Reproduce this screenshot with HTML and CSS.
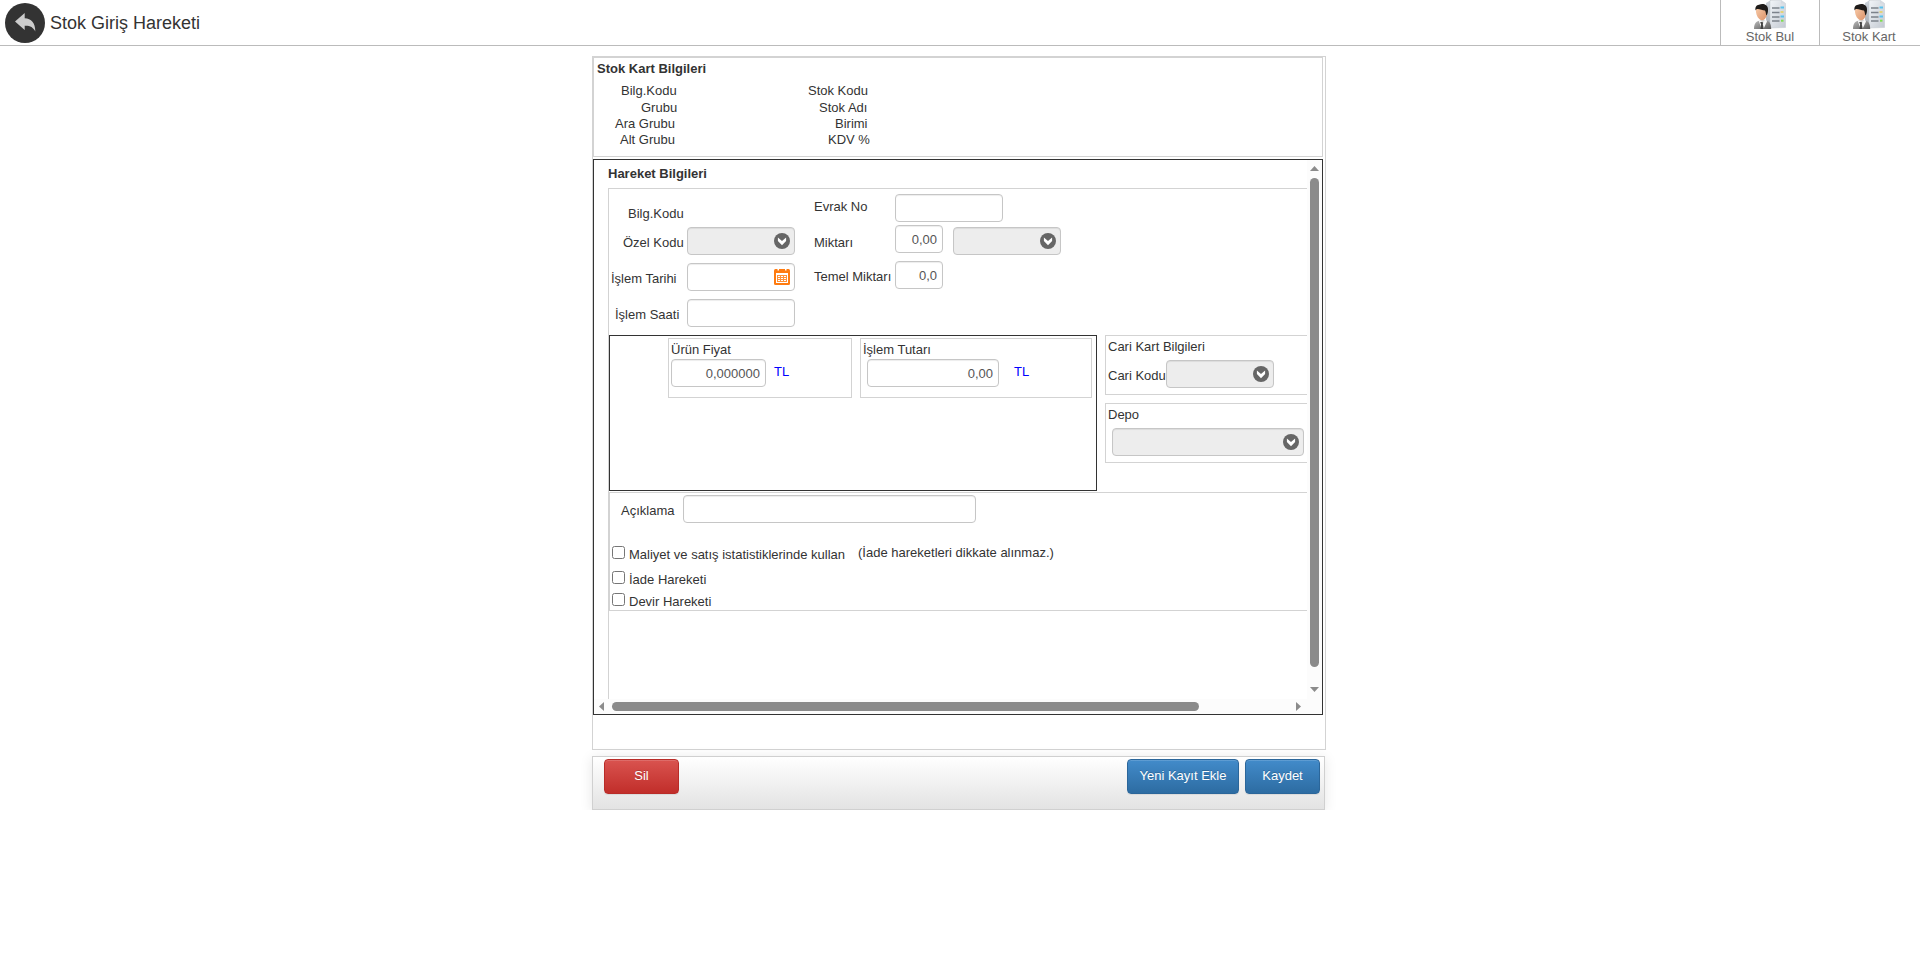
FILE: index.html
```html
<!DOCTYPE html>
<html lang="tr">
<head>
<meta charset="utf-8">
<title>Stok Giriş Hareketi</title>
<link rel="stylesheet" href="styles.css">
</head>
<body>
<svg class="defs" width="0" height="0">
  <defs>
    <linearGradient id="gServer" x1="0" y1="0" x2="1" y2="1"><stop offset="0" stop-color="#f1f4f8"/><stop offset="1" stop-color="#c3c9d1"/></linearGradient>
    <linearGradient id="gSide" x1="0" y1="0" x2="0" y2="1"><stop offset="0" stop-color="#cdd3da"/><stop offset="1" stop-color="#a4abb4"/></linearGradient>
    <linearGradient id="gFace" x1="0" y1="0" x2="1" y2="1"><stop offset="0" stop-color="#fbd0ae"/><stop offset="1" stop-color="#d98f66"/></linearGradient>
    <linearGradient id="gSuit" x1="0" y1="0" x2="1" y2="1"><stop offset="0" stop-color="#bdbdbd"/><stop offset="1" stop-color="#5a5a5a"/></linearGradient>
  </defs>
  <symbol id="user-server" viewBox="0 0 32 30">
    <path d="M12 3l5-3v26l-5 2z" fill="url(#gSide)"/>
    <path d="M16 .5l11-.3 4.600 3.300v24L16 28z" fill="url(#gServer)" stroke="#c2c8cf" stroke-width=".5"/>
    <path d="M27 .2l4.600 3.300H27z" fill="#d5dae0"/>
    <path d="M18 8h7.500M18 12.500h7.500M18 17h7.500M18 21h7.500" stroke="#7c828b" stroke-width="1.600"/>
    <path d="M26.500 7.500h3.500M26.500 16.500h3.500" stroke="#58c3ef" stroke-width="2"/>
    <path d="M26.500 12h3" stroke="#e5d26c" stroke-width="1.800"/>
    <path d="M27 20.700h2.500" stroke="#7ee04c" stroke-width="2"/>
    <path d="M0 29c0-5 1.500-7.500 6-8.500h6c4 1 5 3.500 5.200 8.500z" fill="url(#gSuit)"/>
    <path d="M4.500 20l4.500 1.500 3-2 1 2-3.500 7.500h-2z" fill="#f7f7f7"/>
    <path d="M6 22.500l2-.8 1.300 1-.5 1.400 1 4.900H6.500l.6-4.900z" fill="#444"/>
    <path d="M2 9c0-4 9-6 11 0 .8 4 .2 8-2.700 10.500-1.500 1.300-3.500 1-5-.5C3 17 1.500 13 2 9z" fill="url(#gFace)"/>
    <path d="M1.600 10.500C.8 7 2.500 5 5 4.700c4-1.500 8.800-.2 9 4.300.1 3-.5 5.500-1.600 6.500-.6-1.500-.4-3.500-1.400-5C8.500 10.200 5 8.500 3 9c-.8.300-1 1-1.400 1.500z" fill="#1e1b19"/>
  </symbol>
  <symbol id="chevron" viewBox="0 0 16 16">
    <circle cx="8" cy="8" r="8" fill="#666"/>
    <path d="M3.900 4.600L8 8l4.100-3.400v3.300L8 12.300 3.900 7.900z" fill="#fff"/>
  </symbol>
</svg>

<header class="topbar">
  <svg class="back" viewBox="0 0 40 40">
    <circle cx="20" cy="20" r="20" fill="#333"/>
    <path d="M10 18.500L19.700 10v5.200c6.500.4 10.700 4.400 10.600 13.300-2.200-4.300-5.500-6-10.600-5.700V27z" fill="#ccc"/>
  </svg>
  <h1 class="title">Stok Giriş Hareketi</h1>
  <nav class="tools">
    <a class="tool"><svg class="tool-icon"><use href="#user-server"/></svg><span>Stok Bul</span></a>
    <a class="tool tool-last"><svg class="tool-icon"><use href="#user-server"/></svg><span>Stok Kart</span></a>
  </nav>
</header>

<main class="page">
  <section class="card">
    <div class="stock">
      <h2 class="stock-title">Stok Kart Bilgileri</h2>
      <div class="stock-grid">
        <span class="s1">Bilg.Kodu</span><span class="t1">Stok Kodu</span>
        <span class="s2">Grubu</span><span class="t2">Stok Adı</span>
        <span class="s3">Ara Grubu</span><span class="t3">Birimi</span>
        <span class="s4">Alt Grubu</span><span class="t4">KDV %</span>
      </div>
    </div>

    <div class="scroller">
      <div class="viewport">
        <h2 class="move-title">Hareket Bilgileri</h2>
        <div class="form">
          <div class="top">
            <div class="col-left">
              <div class="code">Bilg.Kodu</div>
              <div class="row"><label class="ozel">Özel Kodu</label><div class="combo w108"><svg class="ico"><use href="#chevron"/></svg></div></div>
              <div class="row"><label class="tarih">İşlem Tarihi</label><div class="box w108">
                <svg class="ico" viewBox="0 0 16 16"><rect width="16" height="16" rx="1.500" fill="#ff7b0f"/><path d="M3.500 0h1.500v1.500H3.500zM11 0h1.500v1.500H11zM2 4h12v10H2z" fill="#fff"/><path d="M3 6h10v7H3z" fill="#ff9138"/><path d="M4 7h2v1H4zM7 7h2v1H7zM10 7h2v1h-2zM4 9h2v1H4zM7 9h2v1H7zM10 9h2v1h-2zM4 11h2v1H4zM7 11h2v1H7zM10 11h2v1h-2z" fill="#fff"/></svg>
              </div></div>
              <div class="row"><label class="saat">İşlem Saati</label><div class="box w108"></div></div>
            </div>
            <div class="col-right">
              <div class="row evrak"><label>Evrak No</label><div class="box w108"></div></div>
              <div class="row miktar"><label>Miktarı</label><div class="box w48">0,00</div><div class="combo w108 unit"><svg class="ico"><use href="#chevron"/></svg></div></div>
              <div class="row temel"><label>Temel Miktarı</label><div class="box w48">0,0</div></div>
            </div>
          </div>

          <div class="middle">
            <div class="prices">
              <div class="price p1">
                <div class="cap">Ürün Fiyat</div>
                <div class="line"><div class="box w95">0,000000</div><span class="cur">TL</span></div>
              </div>
              <div class="price p2">
                <div class="cap">İşlem Tutarı</div>
                <div class="line"><div class="box w132">0,00</div><span class="cur">TL</span></div>
              </div>
            </div>
            <div class="side">
              <div class="panel">
                <div class="cap">Cari Kart Bilgileri</div>
                <div class="line cari"><label>Cari Kodu</label><div class="combo w108"><svg class="ico"><use href="#chevron"/></svg></div></div>
              </div>
              <div class="panel">
                <div class="cap">Depo</div>
                <div class="line depo"><div class="combo w192"><svg class="ico"><use href="#chevron"/></svg></div></div>
              </div>
            </div>
          </div>

          <div class="notes">
            <div class="desc"><label>Açıklama</label><div class="box w293"></div></div>
            <div class="check c1"><input type="checkbox"><span>Maliyet ve satış istatistiklerinde kullan</span><em>(İade hareketleri dikkate alınmaz.)</em></div>
            <div class="check c2"><input type="checkbox"><span>İade Hareketi</span></div>
            <div class="check c3"><input type="checkbox"><span>Devir Hareketi</span></div>
          </div>
        </div>
      </div>
      <div class="vbar">
        <svg class="arrow-v" viewBox="0 0 9 5"><path d="M0 5L4.500 0 9 5z" fill="#8b8b8b"/></svg>
        <div class="vthumb"></div>
        <svg class="arrow-v down" viewBox="0 0 9 5"><path d="M0 0h9L4.500 5z" fill="#8b8b8b"/></svg>
      </div>
      <div class="hbar">
        <svg class="arrow-h" viewBox="0 0 5 9"><path d="M5 0v9L0 4.500z" fill="#8b8b8b"/></svg>
        <div class="hthumb"></div>
        <svg class="arrow-h right" viewBox="0 0 5 9"><path d="M0 0v9l5-4.500z" fill="#8b8b8b"/></svg>
      </div>
    </div>
  </section>

  <footer class="actions">
    <button class="btn red">Sil</button>
    <button class="btn blue wide">Yeni Kayıt Ekle</button>
    <button class="btn blue">Kaydet</button>
  </footer>
</main>
</body>
</html>
```
FILE: styles.css
```css
* { box-sizing: border-box; }
body {
  margin: 0;
  background: #fff;
  color: #333;
  font: 13px/15px "Liberation Sans", Arial, sans-serif;
}
h1, h2 { margin: 0; font-size: inherit; }
svg { display: block; }
label, span, em { white-space: nowrap; }

/* header */
.topbar { display: flex; height: 46px; border-bottom: 1px solid #bbb; }
.back { width: 40px; height: 40px; margin: 3px 5px 0; }
.title { font-size: 18px; font-weight: 400; line-height: 20px; padding-top: 13px; }
.tools { display: flex; margin-left: auto; }
.tool {
  display: flex; flex-direction: column; align-items: center;
  width: 99px; border-left: 1px solid #bbb; color: #666;
}
.tool-last { width: 101px; padding-right: 2px; }
.tool-icon { width: 32px; height: 30px; margin-bottom: -1px; }

/* main card */
.page { width: 734px; margin: 10px 0 0 592px; }
.card { height: 694px; border: 1px solid #d3d3d3; }
.stock { width: 730px; height: 100px; border: 1px solid #d3d3d3; }
.stock-title { padding: 3px 0 0 3px; }
.stock-grid {
  display: grid; grid-template-columns: 194px 1fr; grid-template-rows: 17px 16px 16px 16px;
  padding: 7px 0 0 20px;
}
.s1 { margin-left: 7px; }
.s2 { margin-left: 27px; }
.s3 { margin-left: 1px; }
.s4 { margin-left: 6px; }
.t2 { margin-left: 11px; }
.t3 { margin-left: 27px; }
.t4 { margin-left: 20px; }

/* scrolling area */
.scroller {
  display: grid; grid-template: 539px 15px / 713px 15px;
  width: 730px; height: 556px; margin-top: 2px; border: 1px solid #333;
}
.viewport { overflow: hidden; padding: 6px 0 0 14px; }
.vbar { display: flex; flex-direction: column; align-items: center; background: #fcfcfc; padding-top: 6px; }
.hbar { display: flex; align-items: center; grid-column: 1 / 3; background: #fcfcfc; padding-left: 5px; }
.arrow-v { width: 9px; height: 5px; }
.arrow-h { width: 5px; height: 9px; }
.vthumb { width: 9px; height: 489px; margin-top: 7px; border-radius: 5px; background: #8b8b8b; }
.hthumb { width: 587px; height: 9px; margin-left: 8px; border-radius: 5px; background: #8b8b8b; }
.down { margin-top: 20px; }
.right { margin-left: 97px; }

/* form */
.form { width: 900px; height: 600px; margin-top: 7px; border: 1px solid #d3d3d3; }
.top { display: flex; height: 146px; }
.col-left { width: 205px; padding-top: 17px; }
.code { padding-left: 19px; height: 21px; }
.row { display: flex; align-items: flex-start; height: 36px; }
.row label { padding-top: 8px; }
.col-left label { width: 78px; }
.ozel { padding-left: 14px; }
.tarih { padding-left: 2px; }
.saat { padding-left: 6px; }
.col-right { padding-top: 5px; }
.col-right label { width: 81px; }
.evrak { height: 31px; }
.evrak label { padding-top: 5px; }
.miktar label { padding-top: 10px; }
.unit { margin: 2px 0 0 10px; }

.box, .combo {
  display: flex; justify-content: flex-end; align-items: center; flex: none;
  height: 28px; padding: 1px 5px 0; color: #555;
  border: 1px solid #c6c6c6; border-radius: 4px; background: #fff;
  box-shadow: inset 0 1px 1px rgba(0, 0, 0, .075);
}
.combo { background: #ededed; }
.ico { width: 16px; height: 16px; margin: -1px -1px 0 0; }
.w48 { width: 48px; }
.w95 { width: 95px; }
.w108 { width: 108px; }
.w132 { width: 132px; }
.w192 { width: 192px; }
.w293 { width: 293px; }

.middle { display: flex; height: 157px; }
.prices { display: flex; gap: 8px; width: 488px; height: 156px; padding: 2px 0 0 58px; border: 1px solid #333; }
.price { height: 60px; padding: 3px 2px 0; border: 1px solid #d3d3d3; }
.p1 { width: 184px; }
.p2 { width: 232px; }
.line { display: flex; }
.price .line { padding-top: 2px; }
.cur { padding: 5px 0 0 8px; color: #00f; }
.p2 .line { padding-left: 4px; }
.p2 .cur { padding-left: 15px; }
.side { flex: 1; padding-left: 8px; }
.panel { height: 60px; margin-bottom: 8px; padding: 3px 2px 0; border: 1px solid #d3d3d3; }
.cari { padding-top: 6px; }
.cari label { width: 58px; padding-top: 8px; }
.depo { padding: 6px 0 0 4px; }

.notes { height: 119px; border: 1px solid #d3d3d3; }
.desc { display: flex; padding-top: 2px; }
.desc label { width: 73px; padding: 8px 0 0 11px; }
.check { display: flex; padding-left: 2px; }
.check input { width: 13px; height: 13px; margin: 0 4px 0 0; }
.check span { padding-top: 1px; }
.check em { font-style: normal; margin: -1px 0 0 13px; }
.c1 { margin-top: 23px; height: 25px; }
.c2 { height: 22px; }

/* footer */
.actions {
  display: flex; width: 733px; height: 54px; margin-top: 6px; padding: 2px 4px 0 11px;
  border: 1px solid #d0d0d0; background: linear-gradient(#fff, #e3e3e3);
  box-shadow: 0 2px 12px rgba(0, 0, 0, .1);
}
.btn {
  width: 75px; height: 35px; padding: 0 0 2px; color: #fff; font: inherit;
  border: 1px solid; border-radius: 4px;
  text-shadow: 0 -1px 0 rgba(0, 0, 0, .2);
  box-shadow: inset 0 1px 0 rgba(255, 255, 255, .15), 0 1px 1px rgba(0, 0, 0, .075);
}
.red { border-color: #b92c28; background: linear-gradient(#d9534f, #c12e2a); }
.blue { border-color: #2b669a; background: linear-gradient(#428bca, #2d6ca2); margin-left: 6px; }
.wide { width: 112px; margin-left: auto; }
```
